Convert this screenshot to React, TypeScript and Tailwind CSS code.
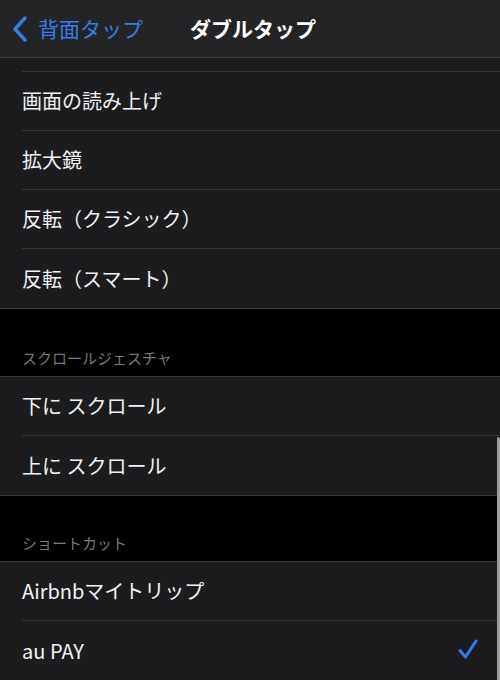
const groups = [
  {
    header: "スクロールジェスチャ",
    headerHeight: "h-[67px]",
    items: ["下に スクロール", "上に スクロール"],
  },
  {
    header: "ショートカット",
    headerHeight: "h-[65px]",
    items: ["Airbnbマイトリップ", "au PAY"],
  },
];

const topItems = ["画面の読み上げ", "拡大鏡", "反転（クラシック）", "反転（スマート）"];

function Row({ label, last, checked }: { label: string; last?: boolean; checked?: boolean }) {
  return (
    <div className="flex h-[59px] flex-col pl-[22px]">
      <div className="flex flex-1 items-center pr-[22px]">
        <span className="flex-1 text-[20px] leading-none text-[#f2f2f4]">{label}</span>
        {checked && (
          <svg width="20" height="22" viewBox="0 0 20 22" fill="none" className="-mt-[3px]">
            <path
              d="M2 12.5 L7.5 19 L18 3"
              stroke="#3b78e6"
              strokeWidth="3"
              strokeLinecap="round"
              strokeLinejoin="round"
            />
          </svg>
        )}
      </div>
      {!last && <div className="h-px bg-[#363638]" />}
    </div>
  );
}

function SectionHeader({ title, height }: { title: string; height: string }) {
  return (
    <div className={`flex items-end px-[22px] pb-[9px] ${height}`}>
      <span className="text-[15px] leading-[18px] text-[#78787d]">{title}</span>
    </div>
  );
}

export default function App() {
  return (
    <div
      className="relative h-[680px] w-[500px] overflow-hidden bg-black"
      style={{ fontFamily: '"Noto Sans CJK JP", "Noto Sans", sans-serif' }}
    >
      {/* nav bar */}
      <div className="grid h-[58px] grid-cols-[1fr_auto_1fr] items-center border-b border-[#3a3a3c] bg-[#242426]">
        <div className="flex items-center pl-[11px]">
          <svg width="18" height="28" viewBox="0 0 18 28" fill="none">
            <path
              d="M14 3 L4 14 L14 25"
              stroke="#3b7be2"
              strokeWidth="3.5"
              strokeLinecap="round"
              strokeLinejoin="round"
            />
          </svg>
          <span className="ml-[9px] text-[21px] leading-none text-[#3b7be2]">背面タップ</span>
        </div>
        <span className="ml-[6px] text-[21px] font-bold leading-none text-white">ダブルタップ</span>
        <div />
      </div>

      {/* first group, scrolled */}
      <div className="border-b border-[#3a3a3c] bg-[#1c1c1e]">
        <div className="flex h-[14px] flex-col justify-end pl-[22px]">
          <div className="h-px bg-[#363638]" />
        </div>
        {topItems.map((item, i) => (
          <Row key={item} label={item} last={i === topItems.length - 1} />
        ))}
      </div>

      {groups.map((group) => (
        <div key={group.header}>
          <SectionHeader title={group.header} height={group.headerHeight} />
          <div className="border-y border-[#3a3a3c] bg-[#1c1c1e]">
            {group.items.map((item, i) => (
              <Row
                key={item}
                label={item}
                last={i === group.items.length - 1}
                checked={item === "au PAY"}
              />
            ))}
          </div>
        </div>
      ))}

      {/* scroll indicator */}
      <div className="absolute right-0 top-[437px] h-[250px] w-[3px] rounded-full bg-[#9c9c9e]" />
    </div>
  );
}
